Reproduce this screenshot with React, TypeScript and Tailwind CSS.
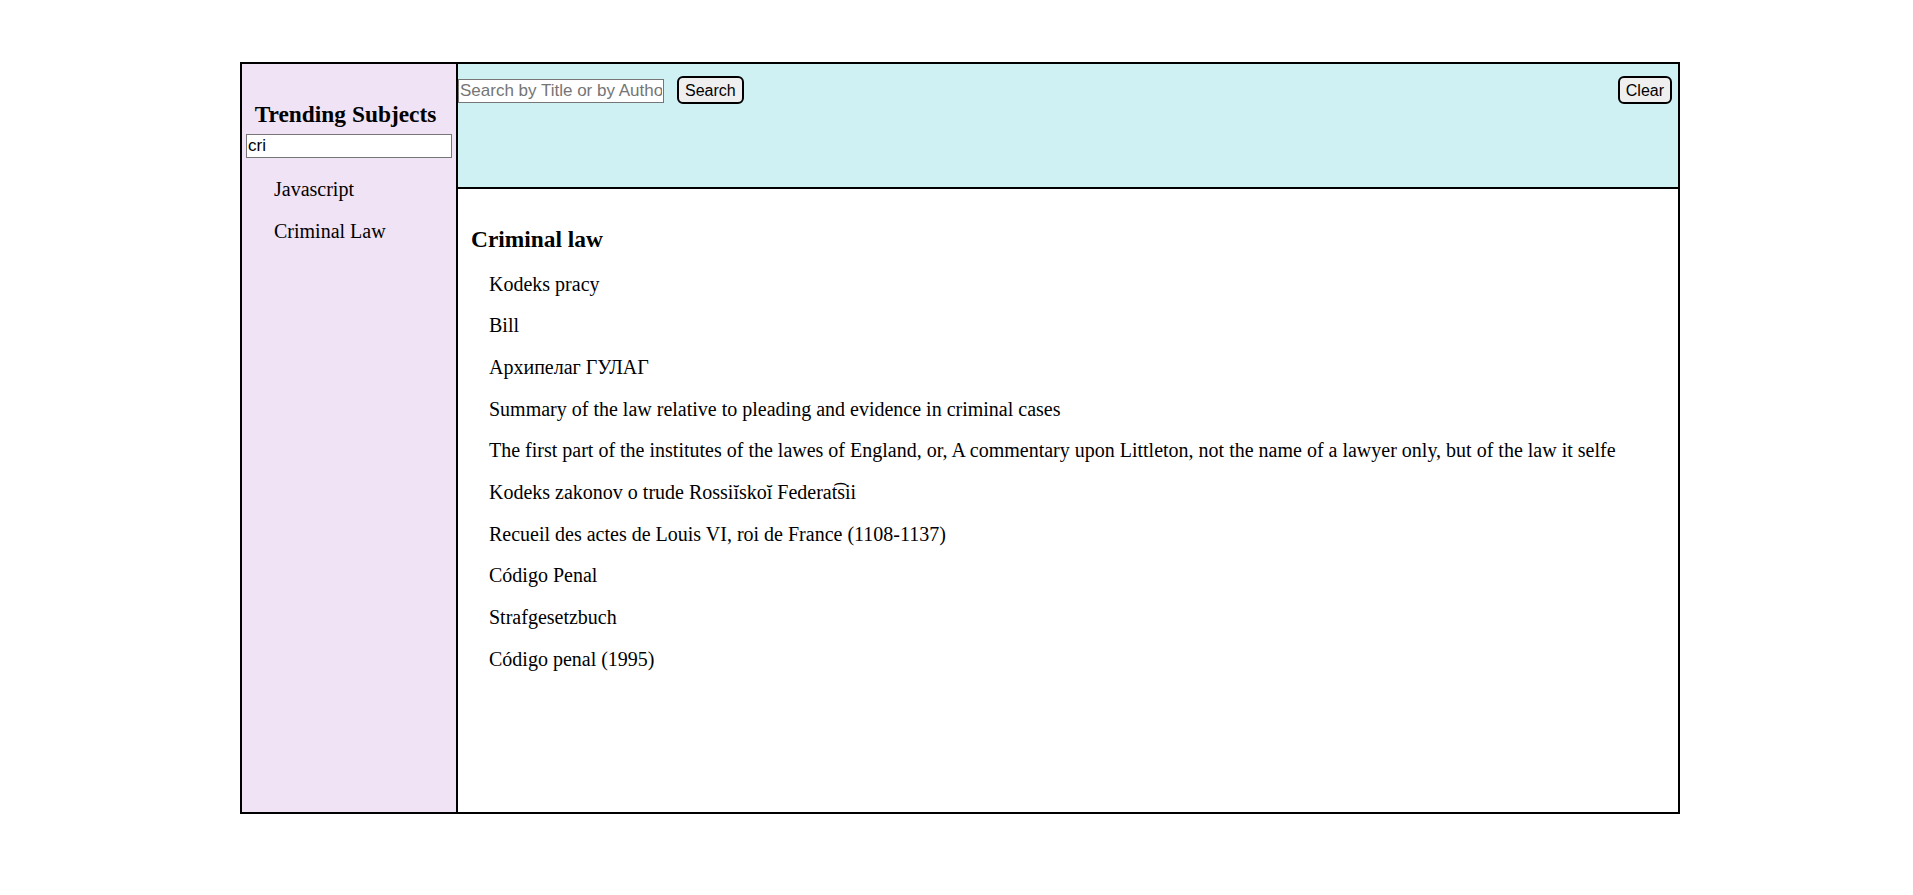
const subjects = ["Javascript", "Criminal Law"];

const books = [
  "Kodeks pracy",
  "Bill",
  "Архипелаг ГУЛАГ",
  "Summary of the law relative to pleading and evidence in criminal cases",
  "The first part of the institutes of the lawes of England, or, A commentary upon Littleton, not the name of a lawyer only, but of the law it selfe",
  "Kodeks zakonov o trude Rossiĭskoĭ Federat͡sii",
  "Recueil des actes de Louis VI, roi de France (1108-1137)",
  "Código Penal",
  "Strafgesetzbuch",
  "Código penal (1995)",
];

export default function App() {
  return (
    <div className="min-h-screen w-full bg-white pt-[62px] font-['Liberation_Serif',serif] text-[20px] text-black">
      <div className="ml-[240px] flex h-[752px] w-[1440px] border-2 border-black">
        {/* sidebar */}
        <aside className="w-[216px] shrink-0 border-r-2 border-black bg-[#f0e3f6]">
          <h3 className="pr-[7px] pt-[37px] text-center text-[23.4px] font-bold leading-[26px]">
            Trending Subjects
          </h3>
          <input
            defaultValue="cri"
            className="mx-auto mt-[7px] block h-[24px] w-[206px] border border-[#767676] bg-white px-[1px] font-['Liberation_Sans',sans-serif] text-[17px] outline-none"
          />
          <div className="mt-[11px] pl-[32px]">
            {subjects.map((s) => (
              <div key={s} className="leading-[41.67px]">
                {s}
              </div>
            ))}
          </div>
        </aside>

        <main className="flex flex-1 flex-col">
          <header className="flex h-[125px] shrink-0 items-start border-b-2 border-black bg-[#d0f1f4] pt-[12px] font-['Liberation_Sans',sans-serif] text-[16px]">
            <input
              placeholder="Search by Title or by Author"
              className="mt-[3px] h-[24px] w-[206px] border border-[#767676] bg-white px-[1px] text-[17px] placeholder:text-[#757575] outline-none"
            />
            <button className="ml-[13px] h-[28px] rounded-[6px] border-2 border-black bg-[#efefef] px-[6px] pt-[2px] leading-none">
              Search
            </button>
            <button className="ml-auto mr-[6px] h-[28px] rounded-[6px] border-2 border-black bg-[#efefef] px-[6px] pt-[2px] leading-none">
              Clear
            </button>
          </header>

          <section className="flex-1 bg-white">
            <h3 className="pl-[13px] pt-[37px] text-[23.4px] font-bold leading-[26px]">
              Criminal law
            </h3>
            <div className="mt-[11.5px] pl-[31px]">
              {books.map((b, i) => (
                <div key={i} className="leading-[41.67px]">
                  {b}
                </div>
              ))}
            </div>
          </section>
        </main>
      </div>
    </div>
  );
}
